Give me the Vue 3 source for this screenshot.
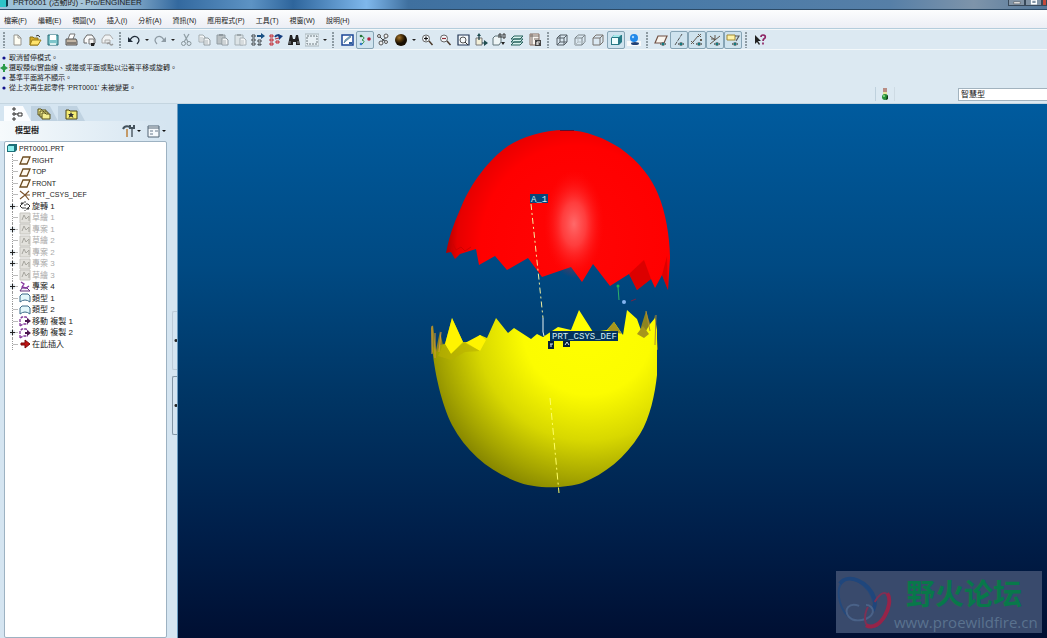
<template>
  <div class="app-window">
    <header class="title-bar">
      <svg class="title-icon" viewBox="0 0 8 8"><path d="M0 0h6v7h-6z" fill="#2fc4c8" /><path d="M6 0h2v6l-2 1z" fill="#0d3f4c" /></svg>
      <span class="title-text">PRT0001 (活動的) - Pro/ENGINEER</span>
      <div class="window-controls">
        <button type="button" class="win-btn" aria-label="minimize">
          <svg viewBox="0 0 16 8"><path d="M5 2h7v2h-7z" fill="#fff" stroke="#333" stroke-width=".5" /></svg>
        </button>
        <button type="button" class="win-btn" aria-label="restore">
          <svg viewBox="0 0 16 8"><path d="M6 0h5v4h-5z" fill="none" stroke="#fff" stroke-width="1.5" /></svg>
        </button>
        <button type="button" class="win-btn close" aria-label="close"></button>
      </div>
    </header>

    <nav class="menu-bar">
      <button v-for="item in menus" :key="item" type="button">{{ item }}</button>
    </nav>

    <div class="toolbar">
      <template v-for="(group, g) in toolbar" :key="g">
        <span class="handle"></span>
        <template v-for="name in group" :key="name">
          <button
            type="button"
            :aria-label="name"
            :class="{ active: pressed.includes(name), drop: name.startsWith('drop') }"
          >
            <svg v-if="name.startsWith('drop')" viewBox="0 0 8 14"><path d="M2 6h4l-2 2z" fill="#222" /></svg>
            <svg v-else viewBox="0 0 14 14" v-html="icons[name]"></svg>
          </button>
        </template>
      </template>
    </div>

    <section class="message-area">
      <ul class="messages">
        <li v-for="msg in messages" :key="msg.text">
          <svg viewBox="0 0 8 8">
            <path v-if="msg.prompt" d="M3 0h2v2l3 2-3 2v2h-2v-2l-3-2 3-2z" fill="#2b9a48" />
            <circle v-else cx="4" cy="4" r="1.6" fill="#11118a" />
          </svg>
          <span>{{ msg.text }}</span>
        </li>
      </ul>
      <div class="status">
        <svg viewBox="0 0 8 14">
          <path d="M2 1h4v5h-4z" fill="#b98d84" />
          <path d="M2 5h4v3h-4z" fill="#e8e5a0" />
          <circle cx="4" cy="10" r="3" fill="#27913a" />
          <circle cx="3" cy="9" r="1" fill="#8ee28f" />
          <path d="M6 8l1 1v3l-2 1z" fill="#103f18" />
        </svg>
      </div>
      <select class="filter" aria-label="filter">
        <option>智慧型</option>
      </select>
    </section>

    <main class="workspace">
      <aside class="navigator">
        <div class="nav-body">
          <div class="tabs">
            <button v-for="tab in tabs" :key="tab" type="button" class="tab" :class="{ selected: tab === 'tree' }" :aria-label="tab">
              <svg viewBox="0 0 14 14" v-html="icons[tab]"></svg>
            </button>
          </div>
          <div class="nav-header">
            <h2>模型樹</h2>
            <button type="button" aria-label="settings"><svg viewBox="0 0 20 14" v-html="icons.settings"></svg></button>
            <button type="button" aria-label="show"><svg viewBox="0 0 20 14" v-html="icons.show"></svg></button>
          </div>
          <div class="tree">
            <div class="root">
              <svg viewBox="0 0 14 12"><path d="M2 4l2-2h8v6l-2 2h-8z" fill="#1d6f78" /><path d="M3 4h6v5h-6z" fill="#8df0ee" /></svg>
              <span>PRT0001.PRT</span>
            </div>
            <ul>
              <li v-for="node in nodes" :key="node.label" :class="[node.state, { datum: node.datum }]">
                <span class="branch"><i v-if="node.expand" class="plus"></i></span>
                <svg viewBox="0 0 14 12" v-html="icons[node.icon]"></svg>
                <span class="label">{{ node.label }}</span>
              </li>
            </ul>
          </div>
        </div>
        <div class="sash">
          <button type="button" class="grip pale" aria-label="collapse browser"></button>
          <button type="button" class="grip" aria-label="collapse navigator"></button>
        </div>
      </aside>

      <section class="viewport">
        <svg class="model" viewBox="178 104 869 534" preserveAspectRatio="xMidYMid meet">
          <defs>
            <radialGradient id="redShade" gradientUnits="userSpaceOnUse" cx="576" cy="245" r="132" gradientTransform="translate(0 -12) scale(1 1.05)">
              <stop offset="0" stop-color="#ff0505" />
              <stop offset=".72" stop-color="#ff0000" />
              <stop offset=".9" stop-color="#e60000" />
              <stop offset="1" stop-color="#a80000" />
            </radialGradient>
            <radialGradient id="redGlow">
              <stop offset="0" stop-color="#ff6a6a" />
              <stop offset=".4" stop-color="#ff5050" stop-opacity=".75" />
              <stop offset="1" stop-color="#ff1010" stop-opacity="0" />
            </radialGradient>
            <radialGradient id="yellowShade" gradientUnits="userSpaceOnUse" cx="588" cy="330" r="170">
              <stop offset="0" stop-color="#ffff00" />
              <stop offset=".38" stop-color="#fcfc00" />
              <stop offset=".65" stop-color="#d8d800" />
              <stop offset=".88" stop-color="#a3a300" />
              <stop offset="1" stop-color="#858500" />
            </radialGradient>
          </defs>

          <path
            fill="url(#redShade)"
            d="M446 253C450 232 456 219 462 205C471 184 488 160 508 146C522 137 543 130 565 130C586 130 606 139 620 148C640 162 652 179 658 194C666 212 670 240 670 258L668 290L662 275L655 288L651 279L637 290L629 274L610 286L593 264L582 282L571 267L542 277L528 258L507 270L495 256L479 265L476 249L460 254L455 259L451 252Z"
          />
          <ellipse cx="574" cy="224" rx="30" ry="54" fill="url(#redGlow)" />
          <path d="M629 274L644 260L651 279L637 290Z M662 275L667 256L668 290Z" fill="#c40000" opacity=".6" />
          <path d="M451 252l2-8 3 6 5-3 4 4 6-4" fill="none" stroke="#d00000" />
          <path d="M560 130.500h14" stroke="#5a1030" />

          <path fill="#8d8420" d="M432 352L431 328L433 325L436 350L440 331L444 350L440 362Z M637 340L646 311L652 330L655 315L658 350Z" />
          <path
            fill="url(#yellowShade)"
            d="M432 345L437 352L440 345L445 344L452 318L463 342L472 342L480 335L487 338L496 318L508 333L514 328L531 339L537 334L543 337L558 327L571 330L579 310L593 332L607 330L614 322L623 335L627 310L637 319L643 336L650 324L655 318L657 330L657 375C655 394 650 418 640 434C625 458 605 474 582 483C566 488 537 490 515 481C490 471 466 452 452 425C442 405 434 372 432 345Z"
          />
          <path fill="#fff400" d="M445 344L452 318L463 342L451 354Z M465 343L480 335L486 340L480 351Z" />
          <path fill="#b9b000" d="M438 356L444 343L451 354L465 342L480 351L465 352L451 360Z" opacity=".6" />
          <path fill="#a7961c" d="M607 330L614 322L622 334Z M637 334l6-8 6 8-5 4z" />
          <path d="M432 326v28M435 333v25M441 332l-2 20" stroke="#d39a38" />
          <path d="M646 311l4 20M656 315l-1 30" stroke="#ad8b35" />

          <path d="M531 204L543 318" stroke="#f4f0a0" stroke-dasharray="6 3 2 3" />
          <path d="M543 318v14l1 4" stroke="#e8f4f4" fill="none" />
          <path d="M550 398L559 493" stroke="#ffff66" stroke-dasharray="7 3 2 3" />
          <path d="M618 287l1 13" stroke="#2fae68" />
          <circle cx="618" cy="286" r="1.500" fill="#16bb4e" />
          <circle cx="624" cy="302" r="2" fill="#83b4f0" />
          <path d="M631 301l5-2" stroke="#772244" />

          <rect x="530" y="194" width="18" height="9" fill="#07477b" />
          <text x="531" y="202" class="tag">A_1</text>
          <rect x="550" y="331" width="68" height="10" fill="#03325c" />
          <text x="552" y="339" class="tag">PRT_CSYS_DEF</text>
          <path d="M548 341h6v8h-6zM563 341h7v6h-7z" fill="#06203b" />
          <path d="M550 344h3M551 344v3M565 345l2-3 2 3" stroke="#d8e6ef" fill="none" />
        </svg>

        <div class="watermark">
          <svg viewBox="0 0 60 62">
            <g fill="none">
              <path d="M17 49C4 42 -1 20 6 11C14 1 34 12 39 31" stroke="#24497c" stroke-width="2" />
              <path d="M4 12C12 1 34 9 40 28C41 33 40 36 38 40" stroke="#1f467c" stroke-width="4" />
              <path d="M24 35C13 31 8 39 13 46C19 53 35 50 38 42C39 37 35 34 31 34" stroke="#4a6288" stroke-width="2" />
              <path d="M33 36C28 46 29 58 38 57C50 55 60 30 53 23C49 19 43 25 40 31" stroke="#7c3155" stroke-width="2" />
              <path d="M31 55C45 63 61 33 53 22" stroke="#962449" stroke-width="4" />
            </g>
          </svg>
          <div class="watermark-text">
            <strong>野火论坛</strong>
            <span>www.proewildfire.cn</span>
          </div>
        </div>
      </section>
    </main>
  </div>
</template>

<script setup>
const menus = ['檔案(F)', '編輯(E)', '視圖(V)', '插入(I)', '分析(A)', '資訊(N)', '應用程式(P)', '工具(T)', '視窗(W)', '說明(H)'];

const toolbar = [
  ['new', 'open', 'save', 'print', 'mail', 'link'],
  ['undo', 'drop-undo', 'redo', 'drop-redo', 'cut', 'copy', 'paste', 'pasteSpecial', 'regen', 'regenAll', 'find', 'select', 'drop-select'],
  ['repaint', 'spin', 'orient', 'appearance', 'drop-appearance', 'zoomIn', 'zoomOut', 'refit', 'reorient', 'savedViews', 'layers', 'viewManager'],
  ['wireframe', 'hidden', 'noHidden', 'shaded', 'realism'],
  ['planes', 'axes', 'points', 'csys', 'notes'],
  ['help'],
];

const pressed = ['spin', 'shaded', 'axes', 'points', 'csys', 'notes'];

const tabs = ['tree', 'folders', 'favorites'];

const messages = [
  { text: '取消暫停模式。' },
  { text: '選取類似實曲線、或邊或平面或點以沿著平移或旋轉。', prompt: true },
  { text: '基準平面將不顯示。' },
  { text: "從上次再生起零件 'PRT0001' 未被變更。" },
];

const nodes = [
  { label: 'RIGHT', icon: 'plane', datum: true },
  { label: 'TOP', icon: 'plane', datum: true },
  { label: 'FRONT', icon: 'plane', datum: true },
  { label: 'PRT_CSYS_DEF', icon: 'axis', datum: true },
  { label: '旋轉 1', icon: 'revolve', expand: true },
  { label: '草繪 1', icon: 'sketch', state: 'hidden' },
  { label: '專案 1', icon: 'sketch', state: 'hidden', expand: true },
  { label: '草繪 2', icon: 'sketch', state: 'hidden' },
  { label: '專案 2', icon: 'sketch', state: 'hidden', expand: true },
  { label: '專案 3', icon: 'sketch', state: 'hidden', expand: true },
  { label: '草繪 3', icon: 'sketch', state: 'hidden' },
  { label: '專案 4', icon: 'project', expand: true },
  { label: '類型 1', icon: 'style' },
  { label: '類型 2', icon: 'style' },
  { label: '移動 複製 1', icon: 'move' },
  { label: '移動 複製 2', icon: 'move', expand: true },
  { label: '在此插入', icon: 'insert' },
];

const eye = '<path d="M6 11q3-3 6 0q-3 3-6 0z" fill="#fff" stroke="#333" stroke-width=".7"/><circle cx="9" cy="11" r="1.300" fill="#117a80"/>';
const page = (x, y, c) => `<path d="M${x} ${y}h4l2 2v5h-6z" fill="#f1f4f5" stroke="${c}"/><path d="M${x + 1} ${y + 3}h3m-3 2h3" stroke="${c}" stroke-width=".7"/>`;
const lens = '<circle cx="6" cy="5.500" r="3.500" fill="#f3f8fb" stroke="#666"/><path d="M9 8l3.500 4" stroke="#4a3a2c" stroke-width="1.500"/>';
// front face plus the receding top and right edges
const box = (c) => `<path d="M2 5h7v7h-7zM2 5l3-3h7l-3 3M12 2v7l-3 3" fill="none" stroke="${c}"/>`;

const icons = {
  new: '<path d="M4 2h4l3 3v7h-7z" fill="#fffef4" stroke="#96958f"/><path d="M8 2v3h3" fill="none" stroke="#96958f"/>',
  open: '<path d="M2 4h3l1 1h4v7h-8z" fill="#d4ad2c" stroke="#8a7014"/><path d="M2 12l2-5h9l-3 5z" fill="#ffe46c" stroke="#9b7d18"/><path d="M8 3q2-2 4 1" fill="none" stroke="#333"/>',
  save: '<path d="M2 2h10v10h-10z" fill="#7dc5ca" stroke="#276b77"/><path d="M4 2h6v5h-6z" fill="#fff"/><path d="M4 10h6v2h-6z" fill="#d6eeee"/>',
  print: '<path d="M4 6l2-5h5l-2 5" fill="#fff" stroke="#777"/><path d="M2 6h10l1 2v4h-11z" fill="#c3b6a5" stroke="#555"/><path d="M3 10h9" stroke="#444"/>',
  mail: '<path d="M5 10h-3v-4l3-4h5l3 4v4" fill="#fafafa" stroke="#666"/><path d="M7 6h5v5h-5z" fill="#f3f3f3" stroke="#777"/><path d="M9 10h4l-1 3h-3z" fill="#222"/>',
  link: '<path d="M5 10h-3v-4l3-4h5l3 4" fill="#f1f3f4" stroke="#aaa"/><path d="M5 7h5v3h-5z" fill="#e6eaec" stroke="#aaa"/><path d="M7 11q2-2 3 0t3 0" fill="none" stroke="#999" stroke-width="1.500"/>',
  undo: '<path d="M3 7q3-5 7-3q4 3 0 7" fill="none" stroke="#222d3a" stroke-width="1.300"/><path d="M1 4v5h5z" fill="#222d3a"/>',
  redo: '<path d="M11 7q-3-5-7-3q-4 3 0 7" fill="none" stroke="#8e9ba4" stroke-width="1.300"/><path d="M13 4v5h-5z" fill="#8e9ba4"/>',
  cut: '<path d="M5 1l4 8M10 1l-5 8" stroke="#92a0a7" stroke-width="1.300"/><circle cx="4.500" cy="10.500" r="2" fill="none" stroke="#88959b"/><circle cx="10" cy="10.500" r="2" fill="none" stroke="#88959b"/>',
  copy: page(2, 2, '#a5adb1') + page(7, 5, '#929ca0'),
  paste: '<path d="M2 2h8v9h-8z" fill="#bac1c4" stroke="#929da3"/><path d="M4 1h4v2h-4z" fill="#8f999f"/>' + page(7, 5, '#8f999f'),
  pasteSpecial: '<path d="M2 2h8v10h-8z" fill="#dce4e7" stroke="#a5b0b5"/><path d="M4 1h4v2h-4z" fill="#9da7ac"/>' + page(7, 5, '#a7b0b5'),
  regen: '<path d="M1 2h3v2h-3zM1 6h3v2h-3zM1 10h3v2h-3zM7 7h3v2h-3zM7 11h3v1h-3z" fill="#fff" stroke="#3a444a"/><path d="M6 3h5" stroke="#174f83" stroke-width="2"/><path d="M10 0l4 3-4 3z" fill="#174f83"/>',
  regenAll: '<path d="M1 2h3v2h-3zM1 6h3v2h-3zM1 10h3v2h-3zM7 8h3v2h-3z" fill="#f0baba" stroke="#b92f3a"/><path d="M6 4q2-3 5-1" fill="none" stroke="#153d7e" stroke-width="2"/><path d="M9 1l5 2-4 4z" fill="#153d7e"/><path d="M6 6l4-1" stroke="#b92f3a"/>',
  find: '<path d="M3 2h2l1 4h2l1-4h2l2 10h-4v-3h-3v3h-5z" fill="#222"/><path d="M3 8v3M11 8v3" stroke="#8a9096"/>',
  select: '<path d="M0 1h14v12h-14z" fill="#e7f0f5" stroke="#a8b5bb"/><path d="M2 3h10v8h-10z" fill="none" stroke="#6f7a80" stroke-dasharray="2 1"/>',
  repaint: '<path d="M2 2h11v10h-11z" fill="#fff" stroke="#1c4796" stroke-width="1.500"/><path d="M4 10l1-3 5-4 1 1-5 4z" fill="#7fa8c4" stroke="#42708f" stroke-width=".6"/><path d="M9 9h3v2h-3z" fill="#2f609d"/>',
  spin: '<circle cx="3" cy="3" r="1.300" fill="#28733a"/><circle cx="3" cy="11" r="1.300" fill="#347dce"/><circle cx="11" cy="6" r="1.800" fill="#b4243d"/><path d="M4 3q4 2 0 4q4 1 0 4" fill="none" stroke="#299142"/>',
  orient: '<path d="M3 3l4 4 5-4M5 11l2-4 4 2" fill="none" stroke="#444"/><g fill="#eee" stroke="#555"><circle cx="3" cy="3" r="1.500"/><circle cx="10" cy="3" r="2"/><circle cx="5" cy="10" r="2"/><circle cx="10" cy="9" r="1.500"/></g>',
  appearance: '<defs><radialGradient id="ball" cx=".35" cy=".3"><stop offset="0" stop-color="#a57731"/><stop offset=".5" stop-color="#593b0e"/><stop offset="1" stop-color="#191003"/></radialGradient></defs><circle cx="7" cy="7" r="6" fill="url(#ball)"/>',
  zoomIn: lens + '<path d="M4 5.500h4M6 3.500v4" stroke="#111" stroke-width="1.200"/>',
  zoomOut: lens + '<path d="M4 5.500h4" stroke="#902d36" stroke-width="1.200"/>',
  refit: '<path d="M2 2h11v10h-11z" fill="#f5f9fb" stroke="#203554" stroke-width="1.200"/><circle cx="7" cy="7" r="3" fill="none" stroke="#555"/><path d="M9 9l3 3" stroke="#333"/>',
  reorient: '<path d="M2 5h6v7h-6z" fill="#f2efd9" stroke="#777"/><path d="M5 7v-5M8 10h4" stroke="#12363c" stroke-width="1.200"/><path d="M3 3l2-3 2 3zM10 7l4 3-4 3z" fill="#1f4c50"/>',
  savedViews: '<path d="M1 5l2-2h6v6l-2 3h-6z" fill="#eef5f6" stroke="#60747a"/><path d="M7 1v4M7 1h2v4M11 1v4h2v-4h-2" fill="none" stroke="#333"/><path d="M9 9h4l-2 3z" fill="#222"/>',
  layers: '<path d="M1 12l3-3h9l-3 3zM1 9l3-3h9l-3 3zM1 6l3-3h9l-3 3z" fill="#d8f4ef" stroke="#25615c"/>',
  viewManager: '<path d="M2 1h9v11h-9z" fill="#f9f5f0" stroke="#856c60"/><path d="M4 1v11M2 3h9M6 6h5" stroke="#756a64"/><path d="M7 7h6v6h-6z" fill="#444"/><path d="M9 9h3M9 11h2M9 9v3" stroke="#fff"/>',
  wireframe: box('#555f66') + '<path d="M5 2v7h7M2 12l3-3" fill="none" stroke="#555f66"/>',
  hidden: box('#7c868b') + '<path d="M5 2v7h7M2 12l3-3" fill="none" stroke="#b2bdc2"/>',
  noHidden: box('#77736e'),
  shaded: '<path d="M2 5l3-3h8v7l-3 3h-8z" fill="#297a86"/><path d="M3 5h6v6h-6z" fill="#effefe"/><path d="M3 4l2-2h7l-2 2z" fill="#a4e8e9"/>',
  realism: '<path d="M0 8h14v5h-14z" fill="#fafafa"/><ellipse cx="8" cy="10.500" rx="4" ry="1.500" fill="#234275"/><circle cx="7" cy="5" r="4" fill="#2188e9"/><circle cx="6" cy="4" r="1.200" fill="#a6d8ff"/>',
  planes: '<path d="M1 10l3-7h9l-3 7z" fill="#f8f4ee" stroke="#715144" stroke-width="1.200"/>' + eye,
  axes: '<path d="M3 12l7-11" stroke="#555" stroke-dasharray="4 1"/>' + eye,
  points: '<path d="M3 9l5-6M1 8l3 3m0-3l-3 3M8 1l3 3m0-3l-3 3M10 6l2 2m0-2l-2 2" stroke="#645b51"/>' + eye,
  csys: '<path d="M2 3l5 4 5-4M7 7v-5M2 11l5-4M3 6h4" stroke="#60564b" fill="none"/>' + eye,
  notes: '<path d="M1 2h8v5h-8z" fill="#fff3a7" stroke="#a08937"/><path d="M9 3h4l-3 5" fill="none" stroke="#555" stroke-width="1.200"/>' + eye,
  help: '<path d="M2 2v9l2-2 2 3 1-1-2-3h3z" fill="#222"/><path d="M8 4q0-2 2-2q3 0 2 3q-2 1-2 3M10 9.500v2" fill="none" stroke="#8d2464" stroke-width="1.700"/>',
  tree: '<path d="M3 1h2v2h-2zM3 6h2v2h-2zM3 11h2v2h-2zM8 6h4v3h-4z" fill="#fff" stroke="#333"/><path d="M5 7h3" stroke="#333"/>',
  folders: '<g fill="#f4ef91" stroke="#57501b"><path d="M1 2h3l1 1h4v5h-8z"/><path d="M3 4h3l1 1h4v5h-8z"/><path d="M5 6h3l1 1h4v5h-8z"/></g>',
  favorites: '<path d="M2 3h3l1 1h7v8h-11z" fill="#f5ed75" stroke="#4c4718"/><path d="M7 5l1 2h2l-1.500 1.500 1 2.500-2.500-1.500-2.500 1.500 1-2.500-1.500-1.500h2z" fill="#333"/>',
  settings: '<path d="M5 5v8" stroke="#c49a68" stroke-width="2"/><path d="M10 5v8" stroke="#76828b" stroke-width="2"/><path d="M1 5q2-4 7-2M8 1v3h4v-3" fill="none" stroke="#44525c" stroke-width="2"/><path d="M15 6h4l-2 2z" fill="#111"/>',
  show: '<path d="M1 2h11v11h-11z" fill="#f5f9fc" stroke="#526475"/><path d="M1 4h11" stroke="#526475"/><path d="M3 7h3m2 0h3M3 10h3" stroke="#687b8d"/><path d="M15 6h4l-2 2z" fill="#111"/>',
  plane: '<path d="M2 10l3-7h7l-3 7z" fill="#fffaf0" stroke="#6d4d22" stroke-width="1.300"/>',
  axis: '<path d="M2 2l5 4 4-4M7 6h5M2 10l5-4 4 5" fill="none" stroke="#7c542d" stroke-width="1.200"/>',
  revolve: '<path d="M7 1v10" stroke="#444" stroke-dasharray="2 1"/><path d="M6 8h-2l-2-2 3-3M8 4h2l2 2-3 3M4 5l-1-2h3M10 7l1 2h-3" fill="none" stroke="#333"/>',
  sketch: '<path d="M2 1h10v10h-10z" fill="#e2e1dc" stroke="#c6c5bf"/><path d="M4 8l2-5 2 4 3-3v5" fill="none" stroke="#a7a69f"/>',
  project: '<path d="M2 10h10l-3-3h-5z" fill="#f5eff8" stroke="#63307d"/><path d="M3 1l3 2-2 3 4 1 3-2" fill="none" stroke="#85359e" stroke-width="1.300"/>',
  style: '<path d="M2 10v-6l2-2h6l2 2v6q-5-4-10 0z" fill="#e3f7fb" stroke="#3d6a88"/>',
  move: '<path d="M2 11v-7l2-2h4l2 2M2 11l3-2h5" fill="none" stroke="#84389b" stroke-width="1.300" stroke-dasharray="3 1"/><path d="M7 5h2v-2l4 3-4 3v-2h-2z" fill="#4c174f"/>',
  insert: '<path d="M3 5h4v-3l5 4-5 4v-3h-4z" fill="#bf1313" stroke="#7b0a0a"/>',
};
</script>

<style>
html,
body,
#app {
  height: 100%;
}

body {
  margin: 0;
  overflow: hidden;
}
</style>

<style scoped>
.app-window {
  display: flex;
  flex-direction: column;
  height: 100vh;
  background: #dce9f2;
  color: #222;
  font-family: "Liberation Sans", "Noto Sans CJK TC", sans-serif;
  font-size: 7px;
}

button {
  padding: 0;
  border: 0;
  background: none;
  color: inherit;
  font: inherit;
}

svg {
  display: block;
  flex: none;
}

.title-bar {
  display: flex;
  align-items: flex-start;
  height: 9px;
  flex: none;
  border-bottom: 1px solid #2c4a66;
  background: linear-gradient(90deg, #9cc0d8 0, #a7c6da 8%, #7ba3c5 13%, #33699f 17%, #5d93c4 24%, #2e659c 28%, #7fb8ec 35%, #3f709f 39%, #4679a8 60%, #567fa7 85%, #7e94aa 93%, #54789b 100%);
}

.title-icon {
  width: 8px;
  height: 8px;
}

.title-text {
  flex: 1;
  margin: -1px 0 0 5px;
  font-size: 8px;
  line-height: 8px;
}

.window-controls {
  display: flex;
}

.win-btn {
  width: 17px;
  height: 6px;
  border: 1px solid #38495a;
  border-top: 0;
  background: #8294a6;
  overflow: hidden;
}

.win-btn.close {
  width: 5px;
  background: #c44a3c;
}

.menu-bar {
  display: flex;
  gap: 11px;
  height: 19px;
  flex: none;
  padding: 1px 0 0 4px;
  box-sizing: border-box;
  border-bottom: 1px solid #b4cddc;
  background: linear-gradient(#fcfdfe, #eceef5);
}

.menu-bar button {
  white-space: nowrap;
}

.toolbar {
  display: flex;
  align-items: center;
  height: 21px;
  flex: none;
  box-sizing: border-box;
  border-bottom: 1px solid #f3f8fa;
  border-top: 1px solid #f3f8fa;
}

.toolbar button {
  display: flex;
  align-items: center;
  justify-content: center;
  width: 18px;
  height: 18px;
  flex: none;
  box-sizing: border-box;
}

.toolbar svg {
  width: 14px;
  height: 14px;
}

.toolbar .drop,
.toolbar .drop svg {
  width: 8px;
}

.toolbar .active {
  border: 1px solid #86a4b5;
  border-radius: 2px;
  background: #cfe3ee;
}

.handle {
  width: 3px;
  height: 16px;
  flex: none;
  margin: 0 3px;
  background: radial-gradient(circle at 1px 1px, #8d9ba3 1px, transparent 1px) 0 0 / 3px 3px;
}

.handle:first-child {
  margin-right: 2px;
}

.message-area {
  display: flex;
  align-items: flex-end;
  height: 54px;
  flex: none;
  padding-bottom: 2px;
  box-sizing: border-box;
  border-bottom: 1px solid #c4d5e0;
}

.messages {
  flex: 1;
  align-self: flex-start;
  margin: 3px 0 0;
  padding: 0;
  list-style: none;
}

.messages li {
  display: flex;
  align-items: center;
  gap: 1px;
  height: 10px;
  line-height: 10px;
  white-space: nowrap;
}

.messages svg {
  width: 8px;
  height: 8px;
}

.status {
  display: flex;
  justify-content: center;
  width: 18px;
  margin-right: 63px;
  border-left: 1px solid #bfd1dd;
  border-right: 1px solid #cedbe4;
}

.status svg {
  width: 8px;
  height: 14px;
}

.filter {
  width: 89px;
  height: 13px;
  padding: 0 2px;
  border: 1px solid #a2b3bf;
  border-right: 0;
  appearance: none;
  background: #fff;
  color: #111;
  font: inherit;
  font-size: 8px;
  line-height: 11px;
}

.workspace {
  display: flex;
  flex: 1;
  min-height: 0;
}

.navigator {
  display: flex;
  width: 178px;
  flex: none;
  background: #d5e5f1;
}

.nav-body {
  display: flex;
  flex-direction: column;
  flex: 1;
  padding-left: 4px;
}

.tabs {
  display: flex;
  height: 17px;
  flex: none;
  padding-top: 2px;
  box-sizing: border-box;
}

.tab {
  display: flex;
  align-items: center;
  width: 27px;
  padding-left: 6px;
  background: #bfd2e1;
  clip-path: polygon(0 0, 70% 0, 100% 100%, 0 100%);
}

.tab.selected {
  background: #fbfdff;
}

.tab svg {
  width: 14px;
  height: 14px;
}

.nav-header {
  display: flex;
  align-items: center;
  gap: 5px;
  height: 20px;
  flex: none;
  margin-left: -4px;
  padding-left: 15px;
  background: linear-gradient(90deg, #f6fafc, #d5e5f1);
}

.nav-header h2 {
  flex: 1;
  margin: 0;
  font-size: 8px;
  line-height: 12px;
}

.nav-header svg {
  width: 20px;
  height: 14px;
}

.tree {
  flex: 1;
  overflow: hidden;
  border: 1px solid #9db2c2;
  border-radius: 2px;
  background: #fff;
}

.root {
  display: flex;
  align-items: center;
  height: 12px;
}

.tree svg {
  width: 14px;
  height: 12px;
}

.tree ul {
  margin: 0 0 0 7px;
  padding: 0;
  list-style: none;
}

.tree li {
  display: flex;
  align-items: center;
  height: 12px;
  font-size: 8px;
  line-height: 11px;
  white-space: nowrap;
}

.tree li:nth-child(even) {
  height: 11px;
}

.tree li.datum {
  font-size: 7px;
}

.tree li.hidden {
  color: #aaa;
}

.branch {
  display: flex;
  align-items: center;
  align-self: stretch;
  width: 5px;
  border-left: 1px dotted #999;
  background: linear-gradient(#bbb, #bbb) 0 50% / 5px 1px no-repeat;
}

.plus {
  width: 5px;
  height: 5px;
  flex: none;
  margin-left: -3px;
  background:
    linear-gradient(#222, #222) 50% 50% / 5px 1px no-repeat,
    linear-gradient(#222, #222) 50% 50% / 1px 5px no-repeat,
    #e4ecf1;
}

.sash {
  display: flex;
  flex-direction: column;
  align-items: flex-end;
  gap: 6px;
  width: 11px;
  padding-top: 207px;
  box-sizing: border-box;
  border-right: 1px solid #6c9cc0;
}

.grip {
  width: 5px;
  height: 59px;
  border: 1px solid #8396a5;
  border-right: 0;
  border-radius: 2px 0 0 2px;
  background: radial-gradient(circle at 3px 50%, #222 1px, transparent 2px);
}

.grip.pale {
  border-color: #bccbd8;
}

.viewport {
  position: relative;
  flex: 1;
  min-width: 0;
  background: linear-gradient(#005b9e 0, #004a83 30%, #003564 55%, #001f4a 80%, #000f32 100%);
}

.model {
  width: 100%;
  height: 100%;
}

.tag {
  fill: #d4eef4;
  font-family: "Liberation Mono", monospace;
  font-size: 9px;
}

.watermark {
  position: absolute;
  right: 5px;
  bottom: 5px;
  display: flex;
  width: 206px;
  height: 62px;
  background: #394a6c;
}

.watermark > svg {
  width: 58px;
  height: 62px;
}

.watermark-text {
  display: flex;
  flex-direction: column;
  align-items: flex-start;
  color: #5a728f;
  font-family: "Open Sans", "Noto Sans CJK SC", sans-serif;
  font-size: 15px;
  line-height: 18px;
}

.watermark-text strong {
  margin-left: 12px;
  color: #08784a;
  font-family: "Noto Sans CJK SC", sans-serif;
  font-size: 29px;
  line-height: 42px;
}
</style>
